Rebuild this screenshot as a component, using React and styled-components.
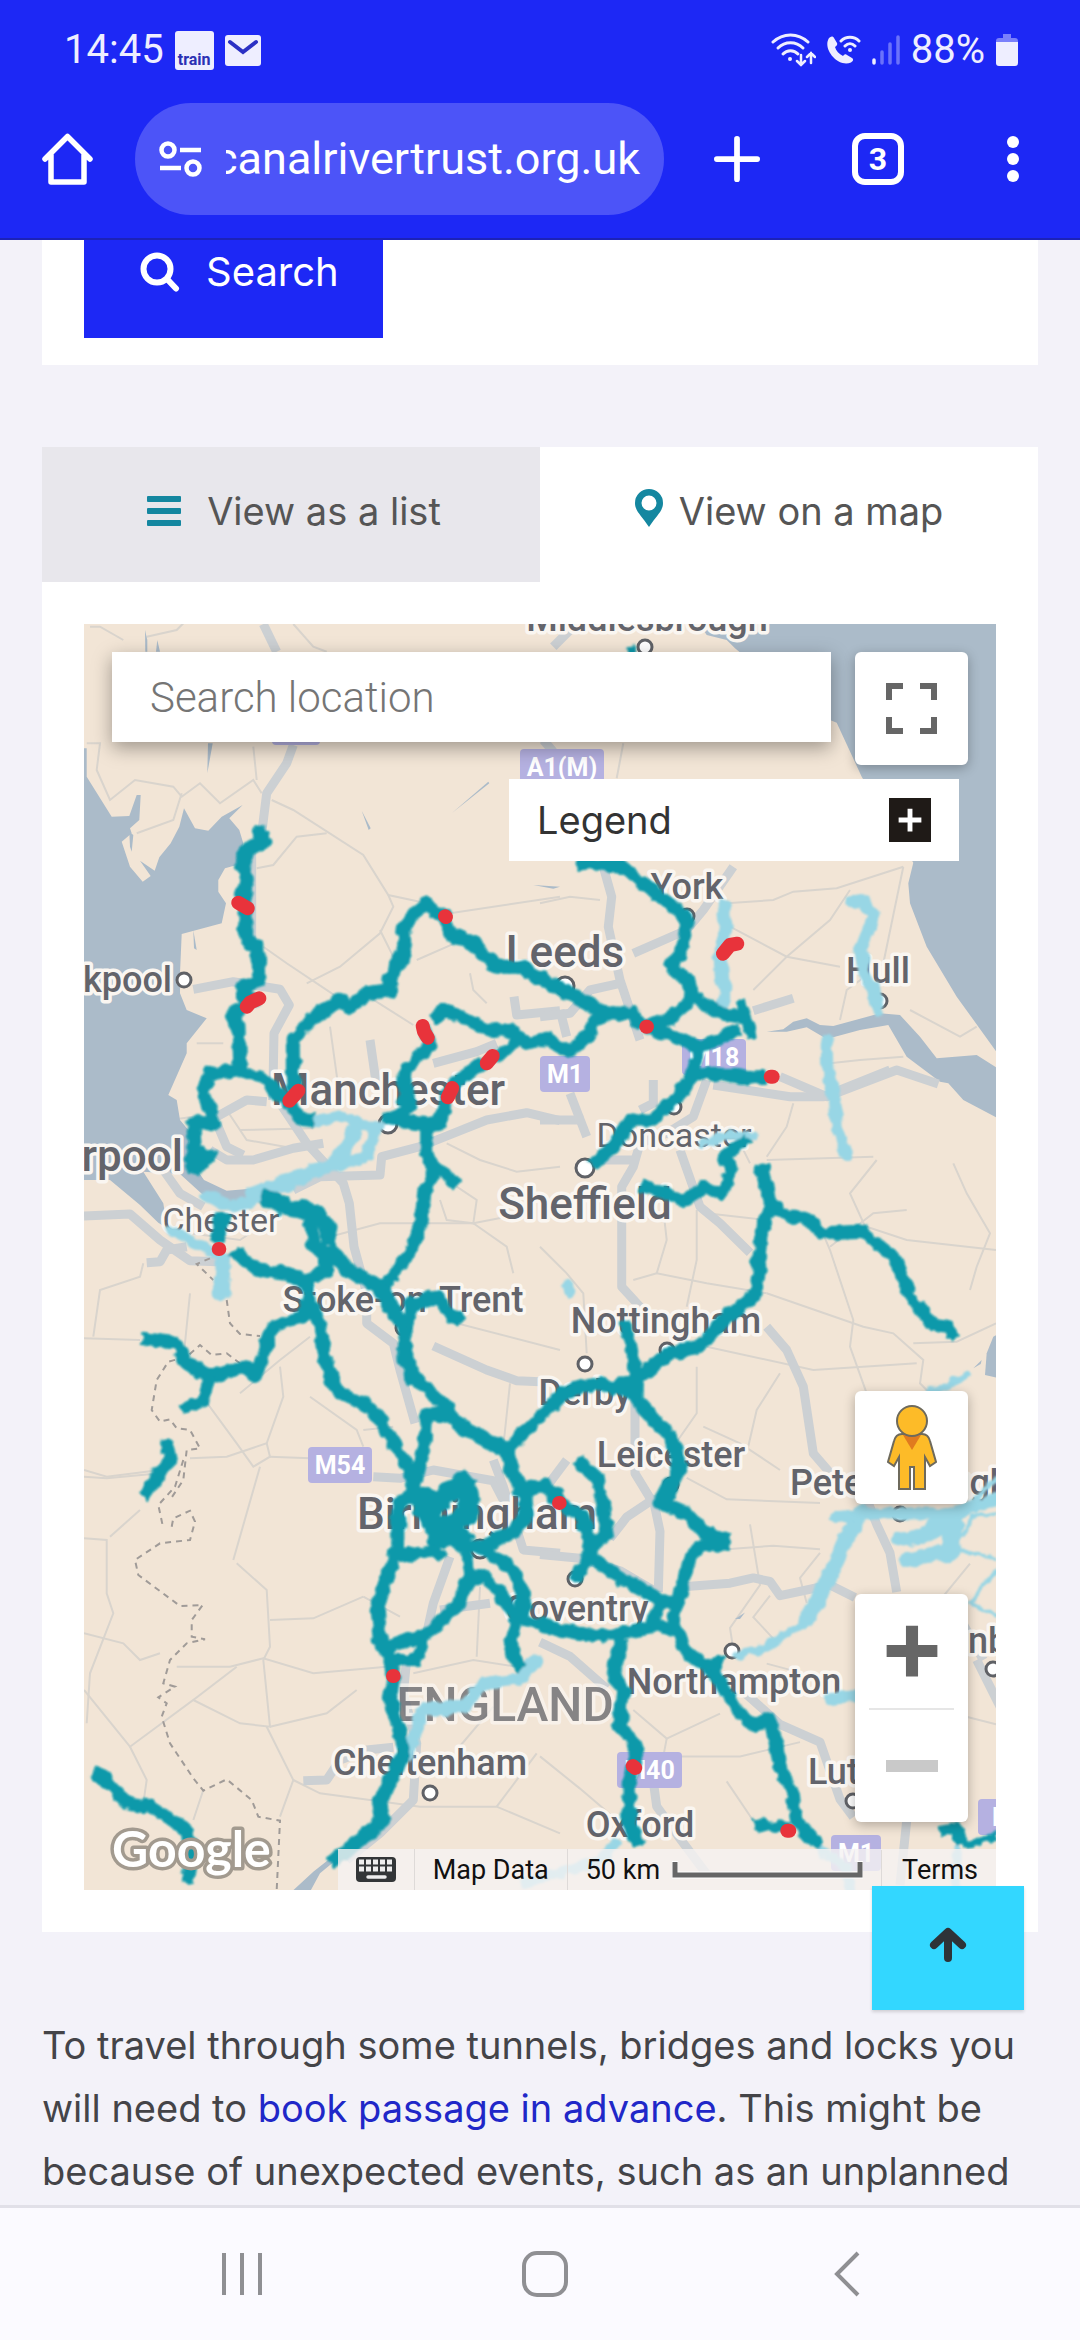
import React from "react";
import styled, { createGlobalStyle } from "styled-components";

const GlobalStyle = createGlobalStyle`
  *, *::before, *::after { box-sizing: border-box; }
  body { margin: 0; background: #f3f2f9; }
  button, input { font: inherit; color: inherit; margin: 0; padding: 0; border: 0; background: none; border-radius: 0; }
  svg { display: block; flex: none; }
`;

const SANS = `Inter, "Open Sans", sans-serif`;
const ROBOTO = `Roboto, "Liberation Sans", sans-serif`;

/* ---------- shell ---------- */

const Page = styled.div`
  min-height: 100vh;
  display: flex;
  flex-direction: column;
  background: #f3f2f9;
  font-family: ${SANS};
  color: #444448;
`;

const Header = styled.header`
  background: #1d28f5;
  color: #fff;
  border-bottom: 2px solid #1c22b8;
  font-family: ${ROBOTO};
`;

const StatusBar = styled.div`
  display: flex;
  align-items: center;
  justify-content: space-between;
  height: 100px;
  padding: 0 62px 0 64px;
  color: #eeeeff;
  font-size: 40px;
  line-height: 48px;
`;

const StatusGroup = styled.div`
  display: flex;
  align-items: center;
  gap: ${(p) => p.$gap}px;
`;

const TrainBadge = styled.span`
  display: flex;
  align-items: flex-end;
  justify-content: center;
  width: 39px;
  height: 39px;
  border-radius: 3px;
  background: #eeeeff;
  color: #2b30b4;
  font-size: 16px;
  font-weight: 700;
  line-height: 20px;
`;

const Toolbar = styled.div`
  display: flex;
  align-items: center;
  height: 138px;
  padding-left: 42px;
  padding-bottom: 20px;
`;

const IconButton = styled.button`
  display: flex;
  align-items: center;
  justify-content: center;
`;

const AddressPill = styled.div`
  flex: 1;
  min-width: 0;
  display: flex;
  align-items: center;
  gap: 24px;
  height: 112px;
  margin-left: 42px;
  padding: 0 20px 0 24px;
  border-radius: 56px;
  background: #4c54f8;
`;

const AddressInput = styled.input`
  flex: 1;
  min-width: 0;
  font-size: 45px;
  line-height: 56px;
  text-indent: -12px;
`;

const ToolbarActions = styled.div`
  display: grid;
  grid-template-columns: 146px 136px 134px;
  height: 112px;
`;

const TabCount = styled.span`
  display: flex;
  align-items: center;
  justify-content: center;
  width: 52px;
  height: 52px;
  border: 6px solid #fff;
  border-radius: 13px;
  font-size: 32px;
  font-weight: 700;
`;

const Main = styled.main`
  flex: 1;
  padding: 0 42px;
`;

/* ---------- search card and tabs ---------- */

const SearchCard = styled.section`
  padding: 0 42px 27px;
  background: #fff;
`;

const SearchButton = styled.button`
  display: flex;
  align-items: center;
  gap: 26px;
  padding: 0 44px 34px 56px;
  background: #1d28f5;
  color: #fff;
  font-size: 40px;
  line-height: 64px;
`;

const MapCard = styled.section`
  margin-top: 82px;
  background: #fff;
`;

const Tabs = styled.div`
  display: grid;
  grid-template-columns: 1fr 1fr;
`;

const Tab = styled.button`
  display: flex;
  align-items: center;
  justify-content: center;
  gap: ${(p) => p.$gap}px;
  height: 135px;
  padding-left: ${(p) => (p.$active ? 0 : 6)}px;
  padding-bottom: 8px;
  background: ${(p) => (p.$active ? "#fff" : "#e8e7ec")};
  color: #555;
  font-size: 38px;
`;

/* ---------- map ---------- */

const MapPanel = styled.div`
  padding: 42px;
`;

const MapFrame = styled.div`
  position: relative;
  aspect-ratio: 912 / 1266;
  overflow: hidden;
  font-family: ${ROBOTO};
`;

const MapDrawing = styled.svg`
  width: 100%;
  height: 100%;
`;

const MapControls = styled.div`
  position: absolute;
  inset: 0;
  padding: 28px 28px 0;
  display: flex;
  flex-direction: column;
`;

const ControlRow = styled.div`
  display: flex;
  align-items: flex-start;
  gap: 24px;
`;

const LocationInput = styled.input`
  flex: 1;
  min-width: 0;
  height: 90px;
  padding: 0 38px;
  background: #fff;
  box-shadow: 0 6px 18px rgba(0, 0, 0, 0.35);
  font-size: 42px;
  font-weight: 300;
  &::placeholder { color: #757575; opacity: 1; }
`;

const ControlButton = styled.button`
  display: flex;
  align-items: center;
  justify-content: center;
  width: 113px;
  height: 113px;
  border-radius: 6px;
  background: #fff;
  box-shadow: 0 3px 12px rgba(0, 0, 0, 0.28);
`;

const Legend = styled.button`
  align-self: flex-end;
  display: flex;
  align-items: center;
  justify-content: space-between;
  width: 450px;
  height: 82px;
  margin: 14px 9px 0 0;
  padding: 0 28px;
  background: #fff;
  color: #333;
  font-family: ${SANS};
  font-size: 38px;
`;

const LegendMark = styled.span`
  display: flex;
  align-items: center;
  justify-content: center;
  width: 42px;
  height: 44px;
  background: #1f1a17;
`;

const SideControls = styled.div`
  display: flex;
  flex-direction: column;
  align-items: flex-end;
  gap: 90px;
  margin-top: auto;
  margin-bottom: 27px;
`;

const ZoomBox = styled.div`
  width: 113px;
  padding: 0 14px;
  border-radius: 6px;
  background: #fff;
  box-shadow: 0 3px 12px rgba(0, 0, 0, 0.28);
`;

const ZoomButton = styled.button`
  display: flex;
  align-items: center;
  justify-content: center;
  width: 100%;
  height: 114px;
  & + & { border-top: 2px solid #e6e6e6; }
`;

const MapFooter = styled.footer`
  align-self: flex-end;
  display: flex;
  align-items: center;
  height: 41px;
  margin-right: -28px;
  background: rgba(245, 243, 243, 0.8);
  color: #111;
  font-size: 27px;
  line-height: 40px;
`;

const FooterItem = styled.button`
  display: flex;
  align-items: center;
  gap: 12px;
  height: 100%;
  padding: 0 18px;
  & + & { border-left: 1px solid #dedad8; }
`;

const FooterLink = styled.a`
  padding: 0 18px 0 20px;
  border-left: 1px solid #dedad8;
  color: inherit;
  text-decoration: none;
`;

/* ---------- copy and system navigation ---------- */

const Copy = styled.p`
  margin: 82px 0 0;
  font-size: 38px;
  line-height: 63px;
  a { color: #2027c8; text-decoration: none; }
`;

const TopLink = styled.a`
  position: fixed;
  right: 56px;
  bottom: 330px;
  display: flex;
  align-items: center;
  justify-content: center;
  width: 152px;
  height: 124px;
  padding-bottom: 6px;
  background: #33d7ff;
  box-shadow: 0 2px 3px rgba(0, 0, 0, 0.15);
`;

const SystemNav = styled.nav`
  display: flex;
  justify-content: space-between;
  align-items: center;
  height: 135px;
  padding: 0 183px 0 192px;
  border-top: 3px solid #e1e0e8;
  background: #fbfaff;
`;

const NavButton = styled(IconButton)`
  width: 100px;
  height: 100px;
`;

/* ---------- map data: each tile is [origin x, origin y, units per px x, units per px y] ---------- */

const TILES = {
  A: [80, 620, 3, 3],
  B: [540, 620, 3, 3],
  C: [80, 1060, 3, 3],
  D: [540, 1060, 3, 3],
  E: [80, 1460, 3, 3],
  F: [540, 1460, 3, 2.8],
};

const trace = (tile, points) => {
  const [ox, oy, sx, sy] = TILES[tile];
  return (
    "M" +
    points
      .split(" ")
      .map((pair) => {
        const [x, y] = pair.split(",").map(Number);
        return `${(ox + x / sx).toFixed(1)} ${(oy + y / sy).toFixed(1)}`;
      })
      .join("L")
  );
};

const SEA = [
  ["A", "0,385 20,385 20,470 95,590 148,588 170,525 182,525 178,600 150,625 155,640 125,665 150,740 188,785 212,768 180,722 224,752 238,712 272,670 298,620 312,565 345,625 385,632 425,590 488,555 448,595 478,630 490,670 470,735 435,745 415,780 415,815 438,850 425,910 305,942 300,1060 300,1120 320,1170 380,1195 320,1270 320,1300 265,1425 290,1440 300,1500 325,1530 330,1620 372,1680 440,1712 530,1705 520,1745 430,1755 380,1735 300,1662 190,1655 250,1750 262,1825 235,1808 180,1755 90,1680 0,1680"],
  ["B", "470,0 500,45 560,60 585,85 700,180 870,300 890,308 965,470 1040,600 1120,728 1105,790 1110,850 1160,980 1250,1130 1380,1310 1380,0"],
  ["B", "1368,1342 1310,1305 1190,1315 1140,1250 1080,1185 1020,1180 880,1218 840,1215 800,1195 760,1205 730,1228 680,1235 740,1235 800,1222 860,1257 960,1230 1045,1215 1100,1310 1200,1385 1225,1390 1270,1440 1380,1498"],
  ["D", "1380,820 1360,830 1340,880 1335,945 1380,955"],
  ["D", "1300,925 1325,900 1322,912"],
  ["E", "635,1295 700,1235 770,1180 780,1190 720,1240 690,1295"],
  ["A", "1115,580 1225,485 1228,490"],
  ["A", "845,572 872,625 866,630"],
  ["A", "384,370 398,370 382,460"],
  ["A", "195,30 202,60 202,95 196,95"],
  ["A", "232,60 240,95 228,95"],
  ["A", "340,930 350,990 342,985"],
  ["A", "1360,795 1440,800 1420,806"],
  ["A", "148,635 160,645 155,695 150,680"],
  ["F", "585,445 615,427 600,445"],
];

const ROADS = [
  ["A", "550,12 590,95"],
  ["A", "640,375 620,430 560,520 545,640"],
  ["A", "515,700 515,960"],
  ["A", "340,1108 460,1085 600,1108 628,1155 582,1240 578,1440"],
  ["A", "870,1260 890,1400"],
  ["A", "1060,1330 1190,1295 1250,1270"],
  ["A", "1440,1172 1310,1185 1302,1130"],
  ["A", "1390,360 1420,395"],
  ["B", "40,80 110,10"],
  ["B", "190,740 215,830 205,920 240,1080 300,1260"],
  ["B", "280,1000 440,930 490,870 580,740"],
  ["B", "0,1190 90,1180 150,1110 240,1090"],
  ["B", "640,1172 760,1135"],
  ["B", "60,1170 80,1250"],
  ["B", "720,1370 860,1430 1070,1350 1195,1392"],
  ["C", "580,100 680,250 790,370 808,430 822,560 860,700 860,790 940,850 960,930 1005,1090"],
  ["C", "390,270 440,300 520,300 640,265 730,250"],
  ["C", "640,390 720,350 900,345 905,290 1020,260 1120,220 1220,180 1340,158 1440,182"],
  ["C", "410,170 500,120 560,125"],
  ["C", "410,190 440,260 490,285"],
  ["C", "12,468 150,462 240,540 330,602 410,605"],
  ["C", "200,608 240,605 260,570 320,560"],
  ["C", "1060,858 1220,930 1310,962 1380,965"],
  ["C", "880,1250 960,1255 1060,1230 1240,1262 1280,1340"],
  ["C", "250,330 300,400 370,440"],
  ["D", "90,100 140,230"],
  ["D", "340,60 340,130 300,150"],
  ["D", "500,60 460,170 380,220 300,250 280,320 245,380 245,680 300,740"],
  ["D", "420,270 480,440 540,490 630,578"],
  ["D", "680,800 740,870 790,980 820,1180 880,1250"],
  ["D", "0,180 130,180"],
  ["D", "285,1000 285,1240 340,1330"],
  ["D", "520,75 750,110 850,110 1050,30"],
  ["D", "180,300 290,300"],
  ["D", "80,1200 20,1280"],
  ["E", "1240,0 1270,80 1330,270 1440,280"],
  ["E", "1110,290 1060,430 1040,520"],
  ["E", "1080,450 1230,430"],
  ["E", "980,600 970,700 1010,850 1000,1020 900,1120 800,1200"],
  ["E", "670,962 740,960 780,900 860,870 940,862"],
  ["F", "0,265 120,275 240,310 350,370"],
  ["F", "210,220 260,160 340,110 360,200 355,370"],
  ["F", "430,355 570,345 640,330 690,340 720,380 870,350 945,385"],
  ["F", "960,60 1010,180 1050,260 1070,370"],
  ["F", "0,510 90,550 200,640"],
  ["F", "600,640 720,740 840,790 900,950 940,1000"],
  ["F", "340,900 350,970 420,1060 500,1160"],
  ["F", "1310,560 1380,690"],
  ["F", "1100,1010 1080,1190"],
  ["F", "1270,460 1330,560"],
];

const LANES = [
  ["A", "20,370 60,370 50,450 90,540 165,480 280,500 305,530 360,490 420,550 520,480 545,520"],
  ["A", "30,20 60,20 130,60"],
  ["A", "200,50 290,30 310,10"],
  ["A", "640,12 700,80 740,95"],
  ["A", "520,380 530,480"],
  ["A", "575,540 640,570 850,705 925,825 1040,850"],
  ["A", "530,745 580,735 650,650 740,640"],
  ["A", "925,825 940,860 900,940 780,1040 680,1090"],
  ["A", "1110,880 1440,830"],
  ["A", "900,930 940,1010"],
  ["A", "850,1120 1000,1215"],
  ["A", "550,980 620,1030 800,1150"],
  ["A", "350,1270 430,1270"],
  ["A", "750,1220 775,1400"],
  ["A", "170,640 280,600 305,520"],
  ["A", "1010,1020 1170,950"],
  ["A", "1170,1060 1180,1110 1220,1150"],
  ["B", "250,370 230,475"],
  ["B", "0,850 90,830 180,840"],
  ["B", "560,850 700,840 760,815 890,805 1090,740"],
  ["B", "570,920 740,1010 900,1040"],
  ["B", "930,810 870,900 740,1010 640,1110"],
  ["B", "900,1200 920,1110 1030,1030 1090,740"],
  ["B", "1110,1170 1260,1250 1310,1220"],
  ["B", "870,1330 960,1320 1090,1310"],
  ["C", "270,180 340,170"],
  ["C", "440,150 500,240 640,265"],
  ["C", "480,210 700,205"],
  ["C", "1100,250 1200,300 1310,335 1440,320"],
  ["C", "1130,380 1190,420 1180,490 1100,480 1080,420"],
  ["C", "1180,490 1280,470"],
  ["C", "1180,490 1280,560 1300,640"],
  ["C", "750,530 900,490 1180,490"],
  ["C", "330,520 480,540 540,500"],
  ["C", "190,610 180,650 60,690 40,830"],
  ["C", "12,835 180,840"],
  ["C", "330,700 310,900"],
  ["C", "480,1000 600,900 690,830"],
  ["C", "600,920 610,1010 560,1150 440,1190 330,1195"],
  ["C", "560,1150 570,1190 520,1220 470,1150 360,1000"],
  ["C", "570,1190 690,1195"],
  ["C", "850,1110 940,1100"],
  ["C", "690,1010 830,1110 850,1160"],
  ["C", "1130,790 1440,870"],
  ["C", "1290,970 1270,1160"],
  ["C", "12,1230 80,1250 240,1230"],
  ["D", "680,300 1000,290"],
  ["D", "500,460 680,480"],
  ["D", "760,130 740,200 680,290"],
  ["D", "280,660 350,640 500,670 680,700"],
  ["D", "350,640 380,540 370,450"],
  ["D", "470,450 470,600 440,740"],
  ["D", "0,560 80,640 130,700 140,880"],
  ["D", "840,500 870,570 940,780 930,860 980,1000"],
  ["D", "980,500 1100,540 1368,570"],
  ["D", "870,560 1000,460 1100,450"],
  ["D", "1010,300 930,400 980,510"],
  ["D", "1240,310 1280,400 1350,520 1310,620 1290,690"],
  ["D", "680,700 970,800 1060,820 1150,900 1140,970 1180,1010"],
  ["D", "500,860 820,930 1130,910"],
  ["D", "720,940 650,1050 620,1180"],
  ["D", "1120,850 1250,845 1368,790"],
  ["D", "470,920 470,1060 400,1160"],
  ["D", "490,1100 600,1150 720,1230"],
  ["D", "600,250 630,310"],
  ["E", "12,50 80,55 240,40"],
  ["E", "12,235 80,240 80,400 100,460 30,640 20,790"],
  ["E", "12,520 130,550 180,600 240,580"],
  ["E", "90,230 180,150"],
  ["E", "570,480 700,475 850,410"],
  ["E", "470,310 560,390 570,560 550,600 570,800 480,790 340,720 150,860 12,690"],
  ["E", "460,300 540,20"],
  ["E", "290,620 450,620 550,595 700,640 920,620"],
  ["E", "340,720 470,620"],
  ["E", "570,800 740,760 830,690"],
  ["E", "560,800 640,960 600,1070"],
  ["E", "150,860 200,960 190,1030"],
  ["E", "640,960 720,1000 1020,1040 1250,1040 1440,1120"],
  ["E", "1000,640 1180,600 1310,620"],
  ["E", "1200,380 1190,590"],
  ["E", "1370,880 1250,1040"],
  ["E", "1240,740 1130,870"],
  ["E", "370,990 340,1080"],
  ["E", "850,410 960,470"],
  ["F", "440,50 560,110 840,120"],
  ["F", "560,250 700,240 840,250"],
  ["F", "630,180 660,350 570,470 580,530"],
  ["F", "690,380 640,440 700,500"],
  ["F", "840,260 780,330 800,400"],
  ["F", "280,700 380,780 540,710"],
  ["F", "380,780 370,830 600,830 780,790"],
  ["F", "0,830 120,920 220,1000"],
  ["F", "680,570 880,620"],
  ["F", "1100,600 1200,700 1368,740"],
  ["F", "1150,450 1290,290"],
  ["F", "560,900 640,1010"],
];

const BORDERS = [
  ["C", "440,720 450,790 480,822 540,828"],
  ["C", "390,595 350,612 400,660"],
  ["C", "480,910 440,880 395,885 360,855 320,890 265,905 230,960 215,1050 240,1085 270,1078 290,1105 330,1110 360,1165 320,1170 310,1260 270,1320"],
  ["E", "310,0 285,80 235,135 250,205"],
  ["E", "275,200 280,175 330,152 345,185 330,240 240,250 165,300 175,345 300,438 368,435 335,480 335,530 375,538 320,550 270,600 250,670 285,680 235,712 260,730 245,770 270,850 340,955 370,992 440,958 515,1020 535,1070 600,1082 590,1290"],
];

const WATERWAYS = [
  ["B", 13, "550,855 556,920 540,1010 545,1080 558,1110 545,1160"],
  ["B", 13, "938,845 970,840 1000,885 962,985 972,1060 1000,1110 1010,1165"],
  ["B", 12, "860,1262 862,1350 885,1440 890,1520 918,1605"],
  ["C", 10, "700,185 790,168 850,195 900,200"],
  ["C", 14, "825,205 790,280 740,320 600,370 520,400"],
  ["C", 12, "885,215 860,285 780,318 740,315"],
  ["C", 12, "380,410 450,438 520,425 540,390 630,380"],
  ["C", 10, "275,510 350,552 430,590"],
  ["C", 16, "432,600 425,700"],
  ["D", 9, "490,252 570,225 640,228"],
  ["D", 12, "84,675 88,692"],
  ["D", 8, "1170,1000 1200,985 1280,945"],
  ["E", 13, "985,880 1030,750 1150,740 1210,672 1320,655 1370,600"],
  ["E", 10, "1330,1270 1440,1240"],
  ["F", 9, "590,545 680,525 800,450"],
  ["F", 15, "800,450 860,340 920,220 960,150"],
  ["F", 12, "890,160 1000,150 1250,150 1368,110"],
  ["F", 14, "1080,220 1150,215 1190,190 1240,190 1240,260 1180,262 1100,280"],
  ["F", 18, "1180,190 1245,180 1230,240"],
  ["F", 4, "1270,210 1300,160 1368,150"],
  ["F", 4, "1250,255 1310,260 1368,280"],
  ["F", 4, "1368,310 1290,400 1368,435"],
  ["F", 5, "1300,120 1368,50"],
  ["F", 12, "870,670 945,660"],
  ["F", 10, "230,1075 180,1120 0,1170"],
  ["F", 10, "840,1090 920,1140 930,1200"],
  ["F", 8, "1250,1090 1250,1200"],
];

const CANALS = [
  ["A", 14, "560,635 540,640 550,668 500,690 485,735 500,780 488,830 500,870 498,955 535,985 538,1080 488,1100 490,1125 520,1140 455,1185 475,1220 482,1345"],
  ["C", 14, "484,0 484,30 390,40 370,90 390,150 400,190 340,190 345,270 330,300 370,335"],
  ["C", 10, "345,285 410,290"],
  ["C", 24, "340,275 365,325"],
  ["C", 13, "490,35 560,62 590,100 630,130 665,178 700,182"],
  ["A", 14, "640,1440 638,1260 700,1195 780,1140 810,1160 860,1120 930,1110 925,1080 975,1000 970,930 1000,880 1035,852 1090,890 1115,950 1165,960 1250,1040 1320,1040 1450,1110 1580,1180 1660,1182 1690,1220"],
  ["A", 13, "1060,1200 1095,1168 1220,1230 1290,1230 1340,1270 1400,1255 1470,1295 1530,1240 1545,1200 1580,1180"],
  ["A", 12, "1030,1225 1052,1270 980,1350 970,1440 990,1470"],
  ["C", 13, "975,30 975,80 995,140 925,178 1040,195 1080,190 1092,140 1110,90 1145,50 1210,10"],
  ["A", 11, "1210,1330 1270,1300 1310,1260"],
  ["C", 13, "1040,195 1040,280 1065,330 1035,390 1025,490 990,580 930,650 905,690"],
  ["C", 11, "1065,320 1110,350 1130,380"],
  ["C", 17, "545,408 620,440 720,460 740,500 750,560"],
  ["C", 13, "690,475 700,550 740,590 740,635 670,662"],
  ["C", 15, "750,560 800,630 900,680 940,760 975,800 978,900 1000,950 1090,1030 1110,1070 1160,1110 1280,1170 1300,1240 1335,1310"],
  ["C", 15, "430,460 412,545"],
  ["C", 13, "455,570 530,630 620,640 680,670 690,720 720,800 740,920 780,1000 870,1040 930,1130 1000,1240 1000,1330"],
  ["C", 13, "680,720 670,770 580,800 550,880 530,950 500,920 390,950 320,910 290,850 185,835"],
  ["C", 12, "390,950 370,1020 305,1048"],
  ["C", 13, "240,1158 265,1160 272,1190 190,1310"],
  ["C", 14, "980,800 1000,730 1070,710 1110,765 1145,785"],
  ["C", 13, "1010,1260 1035,1150 1040,1060 1110,1070"],
  ["C", 13, "1280,1170 1350,1100 1440,1010 1480,985 1560,970 1650,995 1680,960"],
  ["D", 14, "200,990 300,950 380,885 480,860 560,770 650,700 655,640 665,520 690,430 662,310"],
  ["D", 12, "250,780 272,850 290,950"],
  ["D", 14, "290,950 290,1020 390,1130 420,1200 390,1300 360,1340"],
  ["D", 12, "690,430 740,470 790,470 850,520 970,515 1060,590 1110,710 1180,795 1225,800 1245,838"],
  ["D", 12, "305,375 430,420 500,380 545,405 575,330 550,290 620,235"],
  ["B", 13, "110,730 240,735 330,810 430,880 440,920 420,1000 395,1040 440,1080 460,1130 540,1180 620,1195"],
  ["B", 11, "600,1140 622,1200 635,1260"],
  ["B", 13, "460,1130 400,1190 320,1220 400,1250 480,1280 600,1230"],
  ["B", 13, "480,1280 455,1370 430,1420"],
  ["D", 13, "450,42 540,40 620,55 680,52"],
  ["D", 13, "440,60 410,110 340,180 270,180 220,260 155,318"],
  ["B", 11, "255,92 285,90"],
  ["E", 14, "970,0 1000,60 1000,110 955,130 955,270 940,300 915,370 890,450 900,540 930,600 940,650 930,720 950,790 970,880 930,960 900,1030 910,1080 830,1150 750,1210"],
  ["E", 20, "1170,45 1120,90 1070,130 1030,110 1060,170 1070,240 1110,190 1170,160 1160,80"],
  ["E", 20, "1010,110 1060,190 1120,210 1160,250"],
  ["E", 12, "960,288 1060,270 1090,298"],
  ["E", 13, "1070,240 1200,262 1300,330 1330,400 1330,480 1440,510"],
  ["E", 14, "1190,265 1300,215 1340,170 1335,90 1390,78 1440,110"],
  ["E", 13, "1160,270 1170,350 1130,440 1040,520 930,560"],
  ["E", 13, "1170,350 1220,350 1310,470 1290,540 1300,590 1325,625"],
  ["E", 12, "930,600 1010,600 1030,530"],
  ["F", 13, "0,60 60,120 130,160 150,250 110,340"],
  ["F", 14, "110,0 170,50 190,130 200,210 150,240"],
  ["F", 13, "150,270 240,330 360,390 400,400"],
  ["F", 13, "360,400 330,470 230,490 150,490 0,465"],
  ["F", 13, "330,455 400,480"],
  ["F", 13, "430,0 360,120 440,150 490,200 560,225"],
  ["F", 20, "490,220 570,230"],
  ["F", 13, "500,230 450,270 420,380 400,440 430,530 520,590 590,700 650,745 690,725 720,860 760,940 770,1010 840,1080"],
  ["F", 11, "520,590 545,550"],
  ["F", 14, "250,500 220,590 250,650 240,740 290,810 270,900 265,1010 300,1080"],
  ["F", 11, "640,1020 750,1030"],
  ["F", 12, "1200,1040 1250,1030 1270,1080"],
  ["F", 7, "1270,1080 1368,1052"],
  ["E", 14, "40,935 70,950 140,1030 210,1040 320,1110 340,1180 320,1270"],
];

const STOPPAGES = [
  ["A", "475,848 503,865"],
  ["A", "538,1135 510,1148 500,1160"],
  ["A", "1095,889 1098,891"],
  ["A", "1028,1218 1032,1235 1043,1253"],
  ["A", "1238,1308 1220,1330"],
  ["C", "655,92 628,122"],
  ["C", "1117,84 1103,112"],
  ["C", "416,567 418,567"],
  ["B", "592,971 570,975 549,1001"],
  ["B", "319,1220 321,1220"],
  ["B", "692,1370 698,1370"],
  ["F", "57,120 59,120"],
  ["E", "939,648 941,648"],
  ["F", "278,857 286,862"],
  ["F", "742,1038 748,1038"],
];

const SHIELDS = [
  [520, 749, 84, "A1(M)"],
  [540, 1056, 50, "M1"],
  [682, 1039, 64, "M18"],
  [308, 1447, 64, "M54"],
  [617, 1752, 65, "M40"],
  [831, 1835, 50, "M1"],
  [978, 1799, 50, "M"],
  [272, 709, 48, ""],
];

const PLACES = [
  ["Middlesbrough", 647, 631, 36],
  ["York", 687, 899, 36],
  ["Leeds", 565, 967, 44],
  ["Hull", 878, 983, 36],
  ["Manchester", 388, 1105, 44],
  ["Chester", 221, 1232, 34, 400],
  ["Doncaster", 674, 1147, 34, 400],
  ["Sheffield", 585, 1219, 44],
  ["Stoke-on-Trent", 403, 1312, 36],
  ["Nottingham", 666, 1333, 36],
  ["Derby", 585, 1405, 36],
  ["Leicester", 671, 1467, 36],
  ["Birmingham", 477, 1529, 44],
  ["Coventry", 577, 1621, 36],
  ["Northampton", 734, 1694, 36],
  ["Cheltenham", 430, 1775, 36],
  ["Oxford", 640, 1837, 36],
  ["kpool", 172, 992, 36, 500, "end"],
  ["rpool", 183, 1171, 44, 500, "end"],
  ["Peterborough", 790, 1495, 36, 500, "start"],
  ["Luton", 808, 1784, 36, 500, "start"],
  ["nb", 968, 1653, 36, 500, "start"],
];

const TOWN_DOTS = [
  [645, 647, 7], [687, 916, 7], [565, 986, 9], [184, 980, 7], [880, 1001, 7], [388, 1124, 9],
  [403, 1328, 7], [674, 1107, 7], [585, 1168, 9], [667, 1350, 7], [585, 1364, 7], [671, 1485, 7],
  [575, 1579, 7], [732, 1651, 7], [480, 1549, 9], [430, 1793, 7], [900, 1514, 7], [853, 1801, 7],
  [993, 1669, 7],
];

const Water = styled.path`fill: #abbbc9;`;
const Lane = styled.path`fill: none; stroke: #d9d4cd; stroke-width: 2px;`;
const Road = styled.path`fill: none; stroke: #ccd0d3; stroke-width: 9px; stroke-linejoin: round;`;
const Border = styled.path`fill: none; stroke: #a09b98; stroke-width: 2px; stroke-dasharray: 6 5;`;
const Waterway = styled.path`fill: none; stroke: #98d6e5; stroke-linejoin: round; stroke-linecap: round;`;
const Canal = styled.path`fill: none; stroke: #0899aa; stroke-linejoin: round;`;
const Stoppage = styled.path`fill: none; stroke: #e8333b; stroke-width: 14px; stroke-linecap: round; stroke-linejoin: round;`;
const TownDot = styled.circle`fill: #fff; stroke: #5f6166; stroke-width: 3px;`;
const Shield = styled.rect`fill: #b5b1e1;`;
const ShieldText = styled.text`fill: #fff; font: 700 25px ${ROBOTO}; text-anchor: middle;`;
const PlaceName = styled.text`
  fill: #63646b;
  stroke: #faf6f1;
  stroke-width: 7px;
  stroke-linejoin: round;
  paint-order: stroke;
  font-family: ${ROBOTO};
`;
const Wordmark = styled.text`
  fill: #fff;
  stroke: #a29a8f;
  stroke-width: 7px;
  stroke-linejoin: round;
  paint-order: stroke;
  font: 700 50px Lato, sans-serif;
`;

function WaterwayMap() {
  return (
    <MapDrawing viewBox="84 624 912 1266" preserveAspectRatio="xMidYMid slice" role="img" aria-label="Map of waterways">
      <defs>
        <filter id="rough" x="-5%" y="-5%" width="110%" height="110%">
          <feTurbulence type="fractalNoise" baseFrequency="0.09" numOctaves="2" seed="4" />
          <feDisplacementMap in="SourceGraphic" scale="9" xChannelSelector="R" yChannelSelector="G" />
          <feGaussianBlur stdDeviation="1.2" />
        </filter>
      </defs>
      <rect x="84" y="624" width="912" height="1266" fill="#f2e5d6" />
      {LANES.map(([t, d]) => <Lane key={t + d} d={trace(t, d)} />)}
      {SEA.map(([t, d]) => <Water key={t + d} d={trace(t, d) + "Z"} />)}
      {ROADS.map(([t, d]) => <Road key={t + d} d={trace(t, d)} />)}
      {BORDERS.map(([t, d]) => <Border key={t + d} d={trace(t, d)} />)}
      {SHIELDS.map(([x, y, w, label]) => (
        <g key={`${x}-${y}`}>
          <Shield x={x} y={y} width={w} height="36" rx="4" />
          {label && <ShieldText x={x + w / 2} y={y + 27}>{label}</ShieldText>}
        </g>
      ))}
      {TOWN_DOTS.map(([x, y, r]) => <TownDot key={`${x}-${y}`} cx={x} cy={y} r={r} />)}
      {PLACES.map(([name, x, y, size, weight = 500, anchor = "middle"]) => (
        <PlaceName key={name} x={x} y={y} fontSize={size} fontWeight={weight} textAnchor={anchor}>{name}</PlaceName>
      ))}
      <PlaceName x="505" y="1721" fontSize="48" fontWeight="500" textAnchor="middle" opacity="0.75">ENGLAND</PlaceName>
      <g filter="url(#rough)">
        {WATERWAYS.map(([t, w, d]) => <Waterway key={t + d} strokeWidth={w} d={trace(t, d)} />)}
        {CANALS.map(([t, w, d]) => <Canal key={t + d} strokeWidth={w} d={trace(t, d)} />)}
      </g>
      {STOPPAGES.map(([t, d]) => <Stoppage key={t + d} d={trace(t, d)} />)}
      <Wordmark x="112" y="1867">Google</Wordmark>
    </MapDrawing>
  );
}

/* ---------- icons ---------- */

const MailIcon = () => (
  <svg width="36" height="31" viewBox="0 0 36 31">
    <rect width="36" height="31" rx="3" fill="#eeeeff" />
    <path d="M5 7l13 10L31 7" fill="none" stroke="#2b30c4" strokeWidth="4" strokeLinecap="round" />
  </svg>
);

const WifiIcon = () => (
  <svg width="45" height="34" viewBox="0 0 45 34" fill="none" stroke="#eeeeff" strokeWidth="3" strokeLinecap="round">
    <path d="M2 9C12 -0.5 27 -0.5 37 9" />
    <path d="M7 15c7-7 18-7 25 0" />
    <path d="M12 21c4-4.500 11-4.500 15 0" />
    <circle cx="19" cy="26" r="2" fill="#eeeeff" stroke="none" />
    <path d="M30 22v10m-4-4l4 4 4-4M40 30V20m-4 4l4-4 4 4" strokeWidth="2.500" />
  </svg>
);

const CallIcon = () => (
  <svg width="34" height="30" viewBox="0 0 34 30">
    <path d="M2 3c2-2 4-2 5 0l3 5c.6 1.500 0 3-2 4 1 4 4 7 8 9 1.500-2 3-2 4-1l5 3c2 1.500 1 3-1 4.500C11 33-5 14 2 3z" fill="#eeeeff" />
    <g fill="none" stroke="#eeeeff" strokeWidth="3" strokeLinecap="round">
      <path d="M14 6c5-5 13-5 18 0M18 11c3-3 7-3 10 0" />
    </g>
    <circle cx="23" cy="15" r="2" fill="#eeeeff" />
  </svg>
);

const SignalIcon = () => (
  <svg width="28" height="30" viewBox="0 0 28 30" strokeWidth="3.500" strokeLinecap="round">
    <path d="M2 25v3" stroke="#eeeeff" />
    <path d="M10 17v11M18 9v19M26 2v26" stroke="#6b72fa" />
  </svg>
);

const BatteryIcon = () => (
  <svg width="22" height="32" viewBox="0 0 22 32">
    <path d="M7 0h8v4h4a3 3 0 013 3v6H0V7a3 3 0 013-3h4z" fill="#7a80fb" />
    <path d="M0 8h22v21a3 3 0 01-3 3H3a3 3 0 01-3-3z" fill="#eeeeff" />
  </svg>
);

const HomeIcon = () => (
  <svg width="51" height="52" viewBox="0 0 51 52" fill="none" stroke="#fff" strokeWidth="5.500" strokeLinecap="round" strokeLinejoin="round">
    <path d="M3 26L25.500 3.500 48 26M9 22v27h33V22" />
  </svg>
);

const SiteSettingsIcon = () => (
  <svg width="43" height="38" viewBox="0 0 43 38" fill="none" stroke="#fff" strokeWidth="4.500">
    <circle cx="9" cy="10" r="6.500" />
    <circle cx="34" cy="28" r="6.500" />
    <path d="M21 10h21M1 28h21" />
  </svg>
);

const PlusIcon = ({ size, weight, color, cap = "butt" }) => (
  <svg width={size} height={size} viewBox="0 0 48 48" stroke={color} strokeWidth={weight} strokeLinecap={cap}>
    <path d="M24 3v42M3 24h42" />
  </svg>
);

const DotsIcon = () => (
  <svg width="12" height="48" viewBox="0 0 12 48" fill="#fff">
    <circle cx="6" cy="7" r="6" />
    <circle cx="6" cy="24" r="6" />
    <circle cx="6" cy="41" r="6" />
  </svg>
);

const SearchIcon = () => (
  <svg width="40" height="40" viewBox="0 0 40 40" fill="none" stroke="#fff" strokeWidth="6" strokeLinecap="round">
    <circle cx="17" cy="17" r="13.500" />
    <path d="M27 27l9 9.500" />
  </svg>
);

const ListIcon = () => (
  <svg width="34" height="30" viewBox="0 0 34 30" fill="#1487a0">
    <rect width="34" height="6" rx="1" />
    <rect y="12" width="34" height="6" rx="1" />
    <rect y="24" width="34" height="6" rx="1" />
  </svg>
);

const PinIcon = () => (
  <svg width="28" height="44" viewBox="0 0 28 44">
    <path fillRule="evenodd" fill="#1487a0" d="M14 0a14 14 0 0114 14c0 8-6 12-14 24C6 26 0 22 0 14A14 14 0 0114 0zm0 6.500a7.500 7.500 0 100 15 7.500 7.500 0 000-15z" />
  </svg>
);

const FullscreenIcon = () => (
  <svg width="51" height="51" viewBox="0 0 51 51" fill="none" stroke="#666" strokeWidth="6">
    <path d="M3 17V3h14M34 3h14v14M48 34v14H34M17 48H3V34" />
  </svg>
);

const PersonIcon = () => (
  <svg width="50" height="86" viewBox="0 0 50 86" stroke="#6e6a5c" strokeWidth="2">
    <path fill="#fdbb28" d="M15 29h20c5 0 7 3 8 7l6 21-6 4-5-9v32H27V62h-4v22H12V52l-5 9-6-4 6-21c1-4 3-7 8-7z" />
    <path d="M16 30h18l-9 15z" fill="#e07a1f" stroke="none" />
    <circle cx="25" cy="16" r="15" fill="#fdbb28" />
  </svg>
);

const KeyboardIcon = () => (
  <svg width="40" height="25" viewBox="0 0 40 25">
    <rect width="40" height="25" rx="4" fill="#333638" />
    <g stroke="#eee" strokeWidth="5" strokeDasharray="5 2">
      <path d="M3 5h34M3 12h34" />
    </g>
    <path d="M12 20h17" stroke="#eee" strokeWidth="3.500" strokeLinecap="round" />
  </svg>
);

const ScaleBar = () => (
  <svg width="191" height="18" viewBox="0 0 191 18" fill="none">
    <path d="M2.500 0v14h186V0" stroke="#fff" strokeWidth="7" />
    <path d="M3 1v13h185V1" stroke="#666" strokeWidth="5" />
  </svg>
);

const ArrowUpIcon = () => (
  <svg width="38" height="36" viewBox="0 0 38 36" fill="none" stroke="#2e3338" strokeWidth="8" strokeLinecap="round" strokeLinejoin="round">
    <path d="M19 6v25M5 18L19 5l14 13" />
  </svg>
);

/* ---------- page ---------- */

export default function App() {
  return (
    <Page>
      <GlobalStyle />
      <Header>
        <StatusBar>
          <StatusGroup $gap={11}>
            <span>14:45</span>
            <TrainBadge>train</TrainBadge>
            <MailIcon />
          </StatusGroup>
          <StatusGroup $gap={11}>
            <WifiIcon />
            <CallIcon />
            <SignalIcon />
            <span>88%</span>
            <BatteryIcon />
          </StatusGroup>
        </StatusBar>
        <Toolbar>
          <IconButton aria-label="Home"><HomeIcon /></IconButton>
          <AddressPill>
            <SiteSettingsIcon />
            <AddressInput aria-label="Address" defaultValue="canalrivertrust.org.uk" />
          </AddressPill>
          <ToolbarActions>
            <IconButton aria-label="New tab"><PlusIcon size={46} weight={6} color="#fff" cap="round" /></IconButton>
            <IconButton aria-label="Open tabs"><TabCount>3</TabCount></IconButton>
            <IconButton aria-label="Menu"><DotsIcon /></IconButton>
          </ToolbarActions>
        </Toolbar>
      </Header>

      <Main>
        <SearchCard>
          <SearchButton><SearchIcon />Search</SearchButton>
        </SearchCard>

        <MapCard>
          <Tabs>
            <Tab $gap={26}><ListIcon />View as a list</Tab>
            <Tab $active $gap={16}><PinIcon />View on a map</Tab>
          </Tabs>
          <MapPanel>
            <MapFrame>
              <WaterwayMap />
              <MapControls>
                <ControlRow>
                  <LocationInput aria-label="Search location" placeholder="Search location" />
                  <ControlButton aria-label="Full screen"><FullscreenIcon /></ControlButton>
                </ControlRow>
                <Legend>
                  Legend
                  <LegendMark><PlusIcon size={26} weight={9} color="#fff" /></LegendMark>
                </Legend>
                <SideControls>
                  <ControlButton aria-label="Street view"><PersonIcon /></ControlButton>
                  <ZoomBox>
                    <ZoomButton aria-label="Zoom in"><PlusIcon size={58} weight={10} color="#666" /></ZoomButton>
                    <ZoomButton aria-label="Zoom out">
                      <svg width="52" height="12"><rect width="52" height="12" fill="#c9c9c9" /></svg>
                    </ZoomButton>
                  </ZoomBox>
                </SideControls>
                <MapFooter>
                  <FooterItem aria-label="Keyboard shortcuts"><KeyboardIcon /></FooterItem>
                  <FooterItem>Map Data</FooterItem>
                  <FooterItem>50 km <ScaleBar /></FooterItem>
                  <FooterLink href="#terms">Terms</FooterLink>
                </MapFooter>
              </MapControls>
            </MapFrame>
          </MapPanel>
        </MapCard>

        <Copy>
          To travel through some tunnels, bridges and locks you will need to{" "}
          <a href="#book">book passage in advance</a>. This might be because of unexpected events, such as an unplanned
        </Copy>
      </Main>

      <TopLink href="#top" aria-label="Back to top"><ArrowUpIcon /></TopLink>

      <SystemNav>
        <NavButton aria-label="Recent apps">
          <svg width="42" height="44" viewBox="0 0 42 44" stroke="#8f8f93" strokeWidth="4"><path d="M3 1v42M21 1v42M39 1v42" /></svg>
        </NavButton>
        <NavButton aria-label="Home screen">
          <svg width="46" height="46" viewBox="0 0 46 46" fill="none" stroke="#8f8f93" strokeWidth="4"><rect x="2" y="2" width="42" height="42" rx="13" /></svg>
        </NavButton>
        <NavButton aria-label="Back">
          <svg width="26" height="46" viewBox="0 0 26 46" fill="none" stroke="#8f8f93" strokeWidth="4"><path d="M24 2L3 23l21 21" /></svg>
        </NavButton>
      </SystemNav>
    </Page>
  );
}
